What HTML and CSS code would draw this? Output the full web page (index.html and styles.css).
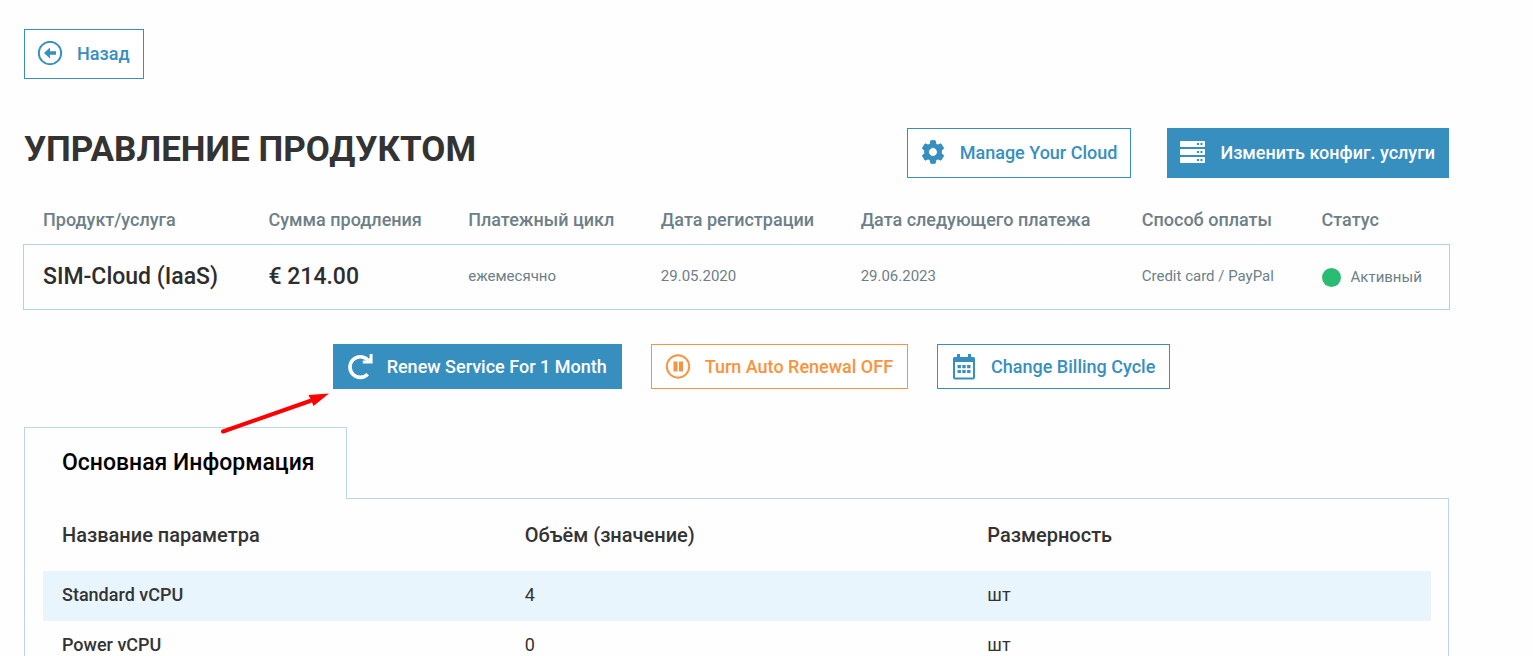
FILE: index.html
```html
<!DOCTYPE html>
<html lang="ru">
<head>
<meta charset="utf-8">
<meta name="viewport" content="width=device-width, initial-scale=1">
<title>Управление продуктом</title>
<link rel="stylesheet" href="styles.css">
</head>
<body>
<main class="page">
  <a class="btn btn-outline" href="#back">
    <svg class="icon" viewBox="0 0 26 26" aria-hidden="true"><circle cx="13" cy="12" r="11.200" fill="none" stroke="currentColor" stroke-width="1.900"/><path d="M7 12l6-5.600v3.900h6v3.400h-6v3.900z" fill="currentColor"/></svg>
    Назад
  </a>

  <header class="head">
    <h1 class="title">УПРАВЛЕНИЕ ПРОДУКТОМ</h1>
    <div class="head-actions">
      <button class="btn btn-outline" type="button">
        <svg class="icon" viewBox="0 0 26 26" aria-hidden="true"><path fill="currentColor" stroke="currentColor" stroke-width="1" stroke-linejoin="round" fill-rule="evenodd" d="M10.800.7h4.400l.5 3.100 2.200 1.300 3-1.300 2.800 4.600-2.400 2v3.200l2.400 2-2.800 4.600-3-1.300-2.200 1.300-.5 3.100h-4.400l-.5-3.100-2.200-1.300-3 1.300-2.800-4.600 2.400-2v-3.200l-2.400-2 2.800-4.600 3 1.300 2.200-1.300zM13 7.600a4.400 4.400 0 1 0 0 8.800a4.400 4.400 0 1 0 0-8.800z"/></svg>
        Manage Your Cloud
      </button>
      <button class="btn btn-solid" type="button">
        <svg class="icon" viewBox="0 0 26 26" aria-hidden="true"><g fill="currentColor"><rect x="0" y="1" width="25" height="6" rx="1"/><rect x="0" y="9" width="25" height="6" rx="1"/><rect x="0" y="17" width="25" height="6" rx="1"/></g><g class="slot"><circle cx="18" cy="4" r="1.200"/><circle cx="21.500" cy="4" r="1.200"/><circle cx="18" cy="12" r="1.200"/><circle cx="21.500" cy="12" r="1.200"/><circle cx="18" cy="20" r="1.200"/><circle cx="21.500" cy="20" r="1.200"/></g></svg>
        Изменить конфиг. услуги
      </button>
    </div>
  </header>

  <table class="service">
    <colgroup>
      <col class="col-product"><col class="col-sum"><col class="col-cycle"><col class="col-reg"><col class="col-next"><col class="col-pay"><col>
    </colgroup>
    <thead>
      <tr><th>Продукт/услуга</th><th>Сумма продления</th><th>Платежный цикл</th><th>Дата регистрации</th><th>Дата следующего платежа</th><th>Способ оплаты</th><th>Статус</th></tr>
    </thead>
    <tbody>
      <tr>
        <td class="strong">SIM-Cloud (IaaS)</td>
        <td class="strong">€ 214.00</td>
        <td>ежемесячно</td>
        <td>29.05.2020</td>
        <td>29.06.2023</td>
        <td>Credit card / PayPal</td>
        <td><span class="status">Активный</span></td>
      </tr>
    </tbody>
  </table>

  <div class="actions">
    <div class="pointed">
      <button class="btn btn-small btn-solid" type="button">
        <svg class="icon" viewBox="0 0 26 26" aria-hidden="true"><path d="M20.700 20.200A10.300 10.300 0 1 1 20.600 5.800" fill="none" stroke="currentColor" stroke-width="3.600"/><path d="M22.600 0h3v9.600h-9.800V6.500h3.800l3-2.600z" fill="currentColor"/></svg>
        Renew Service For 1 Month
      </button>
      <svg class="arrow" viewBox="0 0 110 42" aria-hidden="true"><path d="M3 39.500L90 9" stroke="#fe0000" stroke-width="4" stroke-linecap="round"/><path d="M109 1.500L88.500 3L91 8L93.500 14Z" fill="#fe0000"/></svg>
    </div>
    <button class="btn btn-small btn-warning" type="button">
      <svg class="icon" viewBox="0 0 26 26" aria-hidden="true"><circle cx="13" cy="12.500" r="11.200" fill="none" stroke="currentColor" stroke-width="1.900"/><path d="M8.500 7.500h4v10h-4zM14 7.500h4v10h-4z" fill="currentColor"/></svg>
      Turn Auto Renewal OFF
    </button>
    <button class="btn btn-small btn-outline" type="button">
      <svg class="icon" viewBox="0 0 26 26" aria-hidden="true"><path fill="currentColor" fill-rule="evenodd" d="M6 0h3v3h8V0h3v3h2.500Q24 3 24 4.500v19q0 2-2 2H4q-2 0-2-2v-19Q2 3 3.500 3H6zM4 8v15.500h18V8z"/><path fill="currentColor" d="M6.500 11h3.400v3.200H6.500zM11.300 11h3.400v3.200h-3.400zM16.100 11h3.400v3.200h-3.400zM6.500 16h3.400v3H6.500zM11.300 16h3.400v3h-3.400zM16.100 16h3.400v3h-3.400z"/></svg>
      Change Billing Cycle
    </button>
  </div>

  <section class="info">
    <h2 class="tab">Основная Информация</h2>
    <div class="panel">
      <table class="params">
        <thead>
          <tr><th>Название параметра</th><th>Объём (значение)</th><th>Размерность</th></tr>
        </thead>
        <tbody>
          <tr><th scope="row">Standard vCPU</th><td>4</td><td>шт</td></tr>
          <tr><th scope="row">Power vCPU</th><td>0</td><td>шт</td></tr>
        </tbody>
      </table>
    </div>
  </section>
</main>
</body>
</html>
```
FILE: styles.css
```css
* {
  box-sizing: border-box;
}

body {
  margin: 0;
  height: 100vh;
  overflow: hidden;
  background: #fefefe;
  color: #333;
  font-family: Roboto, "Liberation Sans", sans-serif;
}

.page {
  padding: 29px 84px 0 24px;
}

.btn {
  display: inline-flex;
  align-items: center;
  gap: 14px;
  height: 50px;
  padding: 0 13px 0 12px;
  border: 1px solid #378fc0;
  font: 500 18px/24px Roboto, "Liberation Sans", sans-serif;
  text-decoration: none;
  white-space: nowrap;
  cursor: pointer;
}

.btn-small {
  height: 45px;
  padding: 0 14px 0 13px;
}

.btn-outline {
  background: #fff;
  color: #378fc0;
}

.btn-solid {
  background: #378fc0;
  color: #fff;
}

.btn-warning {
  border-color: #fb923c;
  background: #fff;
  color: #fb923c;
}

.icon {
  flex: none;
  width: 26px;
  height: 26px;
}

.slot {
  fill: #378fc0;
}

.head {
  display: flex;
  justify-content: space-between;
  align-items: center;
  margin-top: 49px;
}

.title {
  margin: 0 0 6px;
  font-size: 35px;
  font-weight: 700;
  line-height: 42px;
}

.head-actions {
  display: flex;
  gap: 36px;
}

.service {
  width: calc(100% + 2px);
  margin: 16px -1px 0;
  border-spacing: 0;
  table-layout: fixed;
  color: #6d7f88;
}

.service th,
.service td {
  padding: 0 0 0 20px;
  text-align: left;
  white-space: nowrap;
}

.service th {
  height: 50px;
  font-size: 18px;
  font-weight: 500;
}

.service td {
  height: 66px;
  padding-bottom: 2px;
  border: solid #b0d4e6;
  border-width: 1px 0;
  font-size: 15px;
}

.service td:first-child {
  border-left-width: 1px;
  padding-left: 19px;
}

.service td:last-child {
  border-right-width: 1px;
  padding-bottom: 0;
}

.service .strong {
  color: #2d2d2d;
  font-size: 23px;
  font-weight: 500;
}

.col-product { width: 15.8%; }
.col-sum { width: 14%; }
.col-cycle { width: 13.5%; }
.col-reg { width: 14%; }
.col-next { width: 19.7%; }
.col-pay { width: 12.6%; }

.status {
  display: flex;
  align-items: center;
  gap: 10px;
}

.status::before {
  content: "";
  width: 19px;
  height: 19px;
  border-radius: 50%;
  background: #2bbc74;
}

.actions {
  display: flex;
  justify-content: center;
  gap: 29px;
  margin-top: 34px;
  padding-left: 30px;
}

.pointed {
  position: relative;
}

.arrow {
  position: absolute;
  z-index: 1;
  top: 48px;
  left: -113px;
  width: 110px;
  height: 42px;
}

.info {
  margin-top: 38px;
}

.tab {
  position: relative;
  width: fit-content;
  margin: 0 0 -1px;
  padding: 20px 31px 21px 37px;
  border: 1px solid #bcd8e8;
  border-bottom: 0;
  background: #fefefe;
  color: #000;
  font-size: 23px;
  font-weight: 500;
  line-height: 30px;
}

.panel {
  padding: 0 17px 0 18px;
  border: 1px solid #bcd8e8;
  border-bottom: 0;
}

.params {
  width: 100%;
  border-spacing: 0;
  table-layout: fixed;
}

.params th,
.params td {
  height: 50px;
  padding: 0 0 4px 19px;
  text-align: left;
  font-size: 18px;
  font-weight: 500;
}

.params td {
  font-weight: 400;
}

.params thead th {
  height: 72px;
  padding-bottom: 0;
  font-size: 20px;
}

.params tbody tr:nth-child(odd) {
  background: #e9f5fc;
}
```
